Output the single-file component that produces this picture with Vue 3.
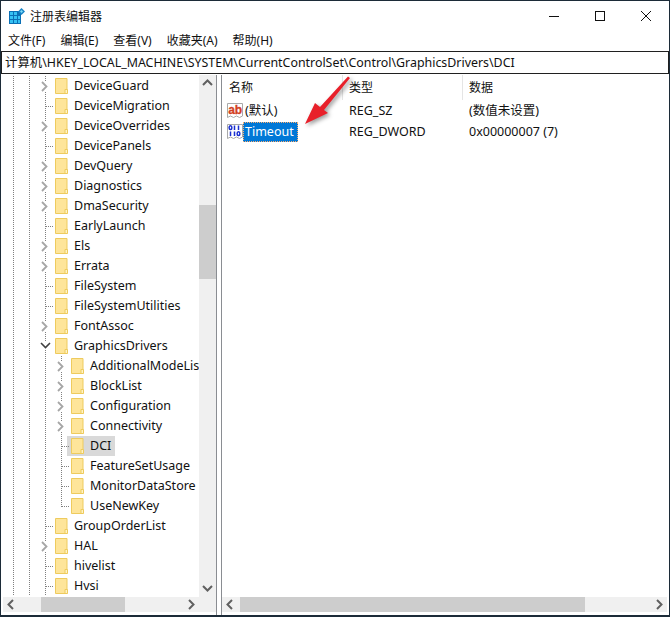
<script setup>
const menus = ['文件(F)', '编辑(E)', '查看(V)', '收藏夹(A)', '帮助(H)']
const rows = [
  ['DeviceGuard', 1, 'c'], ['DeviceMigration', 1, ''], ['DeviceOverrides', 1, 'c'], ['DevicePanels', 1, ''],
  ['DevQuery', 1, 'c'], ['Diagnostics', 1, 'c'], ['DmaSecurity', 1, 'c'], ['EarlyLaunch', 1, ''],
  ['Els', 1, 'c'], ['Errata', 1, 'c'], ['FileSystem', 1, ''], ['FileSystemUtilities', 1, ''],
  ['FontAssoc', 1, 'c'], ['GraphicsDrivers', 1, 'o'],
  ['AdditionalModeLists', 2, 'c'], ['BlockList', 2, 'c'], ['Configuration', 2, 'c'], ['Connectivity', 2, 'c'],
  ['DCI', 2, 's'], ['FeatureSetUsage', 2, ''], ['MonitorDataStore', 2, ''], ['UseNewKey', 2, 'l'],
  ['GroupOrderList', 1, ''], ['HAL', 1, 'c'], ['hivelist', 1, ''], ['Hvsi', 1, '']
].map(([name, level, kind]) => ({ name, level, kind }))
</script>

<template>
  <div class="win">
    <div class="title">
      <svg class="logo" width="16" height="16" viewBox="0 0 16 16">
        <rect x="0" y="3" width="12" height="13" fill="#0a6fb5" />
        <g fill="#35c1f3">
          <rect x="1" y="4" width="3" height="3" /><rect x="5" y="4" width="3" height="3" />
          <rect x="1" y="8" width="3" height="3" /><rect x="5" y="8" width="3" height="3" /><rect x="9" y="8" width="2" height="3" />
          <rect x="1" y="12" width="3" height="3" /><rect x="5" y="12" width="3" height="3" /><rect x="9" y="12" width="2" height="3" />
        </g>
        <path d="M12.5 0 16 3.5 12.5 7 9 3.5Z" fill="#1a86c8" />
        <path d="M12.5 2 14 3.5 12.5 5 11 3.5Z" fill="#7fdcf8" />
      </svg>
      <span class="title-text">注册表编辑器</span>
      <div class="controls">
        <svg class="ctl" width="46" height="30" viewBox="0 0 46 30"><path d="M18 15.500h10" stroke="#111" fill="none" /></svg>
        <svg class="ctl" width="46" height="30" viewBox="0 0 46 30"><rect x="18.500" y="10.500" width="9" height="9" stroke="#111" fill="none" /></svg>
        <svg class="ctl" width="46" height="30" viewBox="0 0 46 30"><path d="M18 10l10 10M28 10L18 20" stroke="#111" fill="none" /></svg>
      </div>
    </div>

    <div class="menu">
      <span v-for="m in menus" :key="m" class="menu-item">{{ m }}</span>
    </div>

    <div class="address">计算机\HKEY_LOCAL_MACHINE\SYSTEM\CurrentControlSet\Control\GraphicsDrivers\DCI</div>

    <div class="panes">
      <div class="left">
        <div class="left-top">
          <div class="tree">
            <div v-for="r in rows" :key="r.name" class="row">
              <span class="guide"></span><span class="guide"></span>
              <span class="guide g3" :class="{ tick: r.level === 1 && r.kind !== 'c' && r.kind !== 'o' }">
                <svg v-if="r.level === 1 && r.kind === 'c'" class="chev" width="9" height="11" viewBox="0 0 9 11"><path d="M2 1l4.500 4.500L2 10" fill="none" stroke="#a6a6a6" stroke-width="1.800" /></svg>
                <svg v-if="r.kind === 'o'" class="chev" width="11" height="9" viewBox="0 0 11 9"><path d="M1 2l4.500 4.500L10 2" fill="none" stroke="#404040" stroke-width="1.600" /></svg>
              </span>
              <span v-if="r.level === 2" class="guide g4" :class="{ tick: r.kind !== 'c', last: r.kind === 'l' }">
                <svg v-if="r.kind === 'c'" class="chev" width="9" height="11" viewBox="0 0 9 11"><path d="M2 1l4.500 4.500L2 10" fill="none" stroke="#a6a6a6" stroke-width="1.800" /></svg>
              </span>
              <span class="item" :class="{ sel: r.kind === 's' }">
                <svg class="folder" width="13" height="16" viewBox="0 0 13 16">
                  <path d="M.5.500h11.500v15H.500Z" fill="#fee59a" stroke="#eecb5e" />
                  <path d="M10 11.500h2.500v4H10Z" fill="#fff3c4" stroke="#eecb5e" />
                </svg>
                <span class="label">{{ r.name }}</span>
              </span>
            </div>
          </div>
          <div class="vbar">
            <svg class="vbtn" width="17" height="17" viewBox="0 0 17 17"><path d="M4 10l4.500-4.500L13 10" fill="none" stroke="#606060" stroke-width="2" /></svg>
            <div class="vtrack"><div class="vthumb"></div></div>
            <svg class="vbtn" width="17" height="17" viewBox="0 0 17 17"><path d="M4 6l4.500 4.500L13 6" fill="none" stroke="#606060" stroke-width="2" /></svg>
          </div>
        </div>
        <div class="hbar hbar-left">
          <svg class="hbtn" width="17" height="15" viewBox="0 0 17 15"><path d="M10 3L5.500 7.500 10 12" fill="none" stroke="#606060" stroke-width="2" /></svg>
          <div class="htrack"><div class="hthumb thumb-l"></div></div>
          <svg class="hbtn" width="17" height="15" viewBox="0 0 17 15"><path d="M7 3l4.500 4.500L7 12" fill="none" stroke="#606060" stroke-width="2" /></svg>
        </div>
      </div>

      <div class="right">
        <div class="list">
          <div class="head">
            <span class="col c1">名称</span><span class="col c2">类型</span><span class="col c3">数据</span>
          </div>
          <div class="vrow">
            <span class="c1 name">
              <svg class="vicon" width="16" height="17" viewBox="0 0 16 17">
                <path d="M.5 1.500h15v12.500l-3 1.500-3-1.500-3 1.500-3-1.500-3 1.500Z" fill="#fff" stroke="#a9a9a9" />
                <text x="1.200" y="11.500" font-family="Liberation Sans, sans-serif" font-size="12" font-weight="700" fill="#d2401f" stroke="#d2401f" stroke-width=".3">ab</text>
              </svg>
              <span class="vname">(默认)</span>
            </span>
            <span class="c2">REG_SZ</span><span class="c3">(数值未设置)</span>
          </div>
          <div class="vrow">
            <span class="c1 name">
              <svg class="vicon" width="16" height="17" viewBox="0 0 16 17">
                <path d="M.5 1.500h15v12.500l-3 1.500-3-1.500-3 1.500-3-1.500-3 1.500Z" fill="#fff" stroke="#a9a9a9" />
                <g fill="none" stroke="#1a2fd0" stroke-width="1.500">
                  <ellipse cx="3.500" cy="4.700" rx="1.400" ry="1.900" /><path d="M7.500 2.500v4.500M11.500 2.500v4.500" />
                  <path d="M3.500 8.500v4.500M7.500 8.500v4.500" /><ellipse cx="11.500" cy="10.700" rx="1.400" ry="1.900" />
                </g>
              </svg>
              <span class="vname selected">Timeout</span>
            </span>
            <span class="c2">REG_DWORD</span><span class="c3">0x00000007 (7)</span>
          </div>
        </div>
        <div class="hbar hbar-right">
          <svg class="hbtn" width="17" height="15" viewBox="0 0 17 15"><path d="M10 3L5.500 7.500 10 12" fill="none" stroke="#606060" stroke-width="2" /></svg>
          <div class="htrack"><div class="hthumb thumb-r"></div></div>
          <svg class="hbtn" width="17" height="15" viewBox="0 0 17 15"><path d="M7 3l4.500 4.500L7 12" fill="none" stroke="#606060" stroke-width="2" /></svg>
        </div>
        <svg class="arrow" width="70" height="60" viewBox="0 0 70 60">
          <path d="M10 49 20 28 25 32 53 1.500 55 3 29 35 33 38Z" fill="#e8202a" />
        </svg>
      </div>
    </div>
  </div>
</template>

<style scoped>
.win {
  width: 670px;
  height: 617px;
  box-sizing: border-box;
  background: #fff;
  border: 1px solid #1c2b38;
  border-bottom-width: 2px;
  display: flex;
  flex-direction: column;
  font-family: "Noto Sans", "Noto Sans CJK SC", sans-serif;
  font-size: 12.5px;
  color: #111;
  overflow: hidden;
}
.title {
  height: 29px;
  display: flex;
  align-items: center;
  padding-left: 8px;
  flex: none;
}
.logo { flex: none; }
.title-text { margin-left: 5px; font-size: 12px; }
.controls { margin-left: auto; display: flex; }
.ctl { display: block; }
.menu {
  height: 21px;
  flex: none;
  display: flex;
  align-items: center;
  padding-left: 7px;
  gap: 15px;
}
.menu-item { font-size: 12px; line-height: 20px; }
.address {
  height: 23px;
  box-sizing: border-box;
  flex: none;
  border: 1px solid #202020;
  line-height: 21px;
  padding-left: 3px;
  font-size: 12.4px;
  white-space: nowrap;
}
.panes {
  flex: 1;
  min-height: 0;
  display: flex;
  padding-top: 1px;
  background: #fff;
}
.left {
  width: 216px;
  flex: none;
  box-sizing: border-box;
  padding-left: 2px;
  border-right: 1px solid #8a8d92;
  display: flex;
  flex-direction: column;
}
.left-top {
  flex: 1;
  min-height: 0;
  display: flex;
}
.tree {
  flex: 1;
  min-width: 0;
  overflow: hidden;
  padding-top: 1px;
  padding-left: 2px;
}
.row {
  height: 20px;
  display: flex;
  white-space: nowrap;
}
.guide {
  width: 16px;
  flex: none;
  position: relative;
  background-image: linear-gradient(#808080 50%, transparent 50%);
  background-size: 1px 2px;
  background-repeat: repeat-y;
  background-position: 8px 0;
}
.guide.tick::after {
  content: "";
  position: absolute;
  left: 9px;
  top: 10px;
  width: 7px;
  height: 1px;
  background-image: linear-gradient(90deg, #808080 50%, transparent 50%);
  background-size: 2px 1px;
}
.guide.last { height: 11px; }
.chev {
  position: absolute;
  left: 3px;
  top: 5px;
  background: #fff;
}
.item {
  display: flex;
  align-items: center;
  height: 20px;
  padding-left: 2px;
  min-width: 0;
}
.item.sel { background: #d9d9d9; margin-left: -2px; padding-left: 4px; padding-right: 4px; }
.folder { flex: none; }
.label { margin-left: 6px; line-height: 20px; }
.vbar {
  width: 17px;
  flex: none;
  background: #f0f0f0;
  display: flex;
  flex-direction: column;
}
.vbtn { flex: none; display: block; }
.vtrack { flex: 1; padding-top: 113px; }
.vthumb { height: 74px; background: #cdcdcd; }
.hbar {
  height: 15px;
  flex: none;
  background: #f0f0f0;
  display: flex;
  margin-bottom: 3px;
}
.hbar-left { box-sizing: content-box; padding-right: 17px; }
.hbar-right { margin-right: 2px; }
.hbtn { flex: none; display: block; }
.htrack { flex: 1; min-width: 0; }
.hthumb { height: 15px; background: #cdcdcd; }
.thumb-l { width: 84px; margin-left: 21px; }
.thumb-r { width: 345px; margin-left: 1px; }
.right {
  flex: 1;
  min-width: 0;
  box-sizing: border-box;
  margin-left: 4px;
  border-left: 1px solid #8a8d92;
  display: flex;
  flex-direction: column;
  position: relative;
}
.list { flex: 1; min-height: 0; }
.head {
  display: flex;
  height: 25px;
}
.col {
  display: block;
  line-height: 25px;
  font-size: 12px;
}
.c1, .c2 { width: 120px; flex: none; box-sizing: border-box; padding-left: 7px; }
.c3 { flex: none; box-sizing: border-box; padding-left: 7px; }
.col.c2, .col.c3 { border-left: 1px solid #e5e5e5; padding-left: 6px; }
.vrow {
  display: flex;
  height: 21px;
  align-items: center;
  line-height: 20px;
}
.name { display: flex; align-items: center; padding-left: 5px; }
.vicon { flex: none; }
.vname { margin-left: 1px; padding: 0 5px 0 1px; }
.vname.selected {
  margin-left: 0;
  padding-left: 2px;
  padding-right: 4px;
  background: #0078d7;
  color: #fff;
  outline: 1px dotted #ffb070;
  outline-offset: -1px;
}
.arrow {
  position: absolute;
  left: 73px;
  top: 0;
  pointer-events: none;
  filter: drop-shadow(2px 2px 2px rgba(0, 0, 0, .4));
}
</style>

<style>
html, body { margin: 0; padding: 0; background: #fff; }
</style>
